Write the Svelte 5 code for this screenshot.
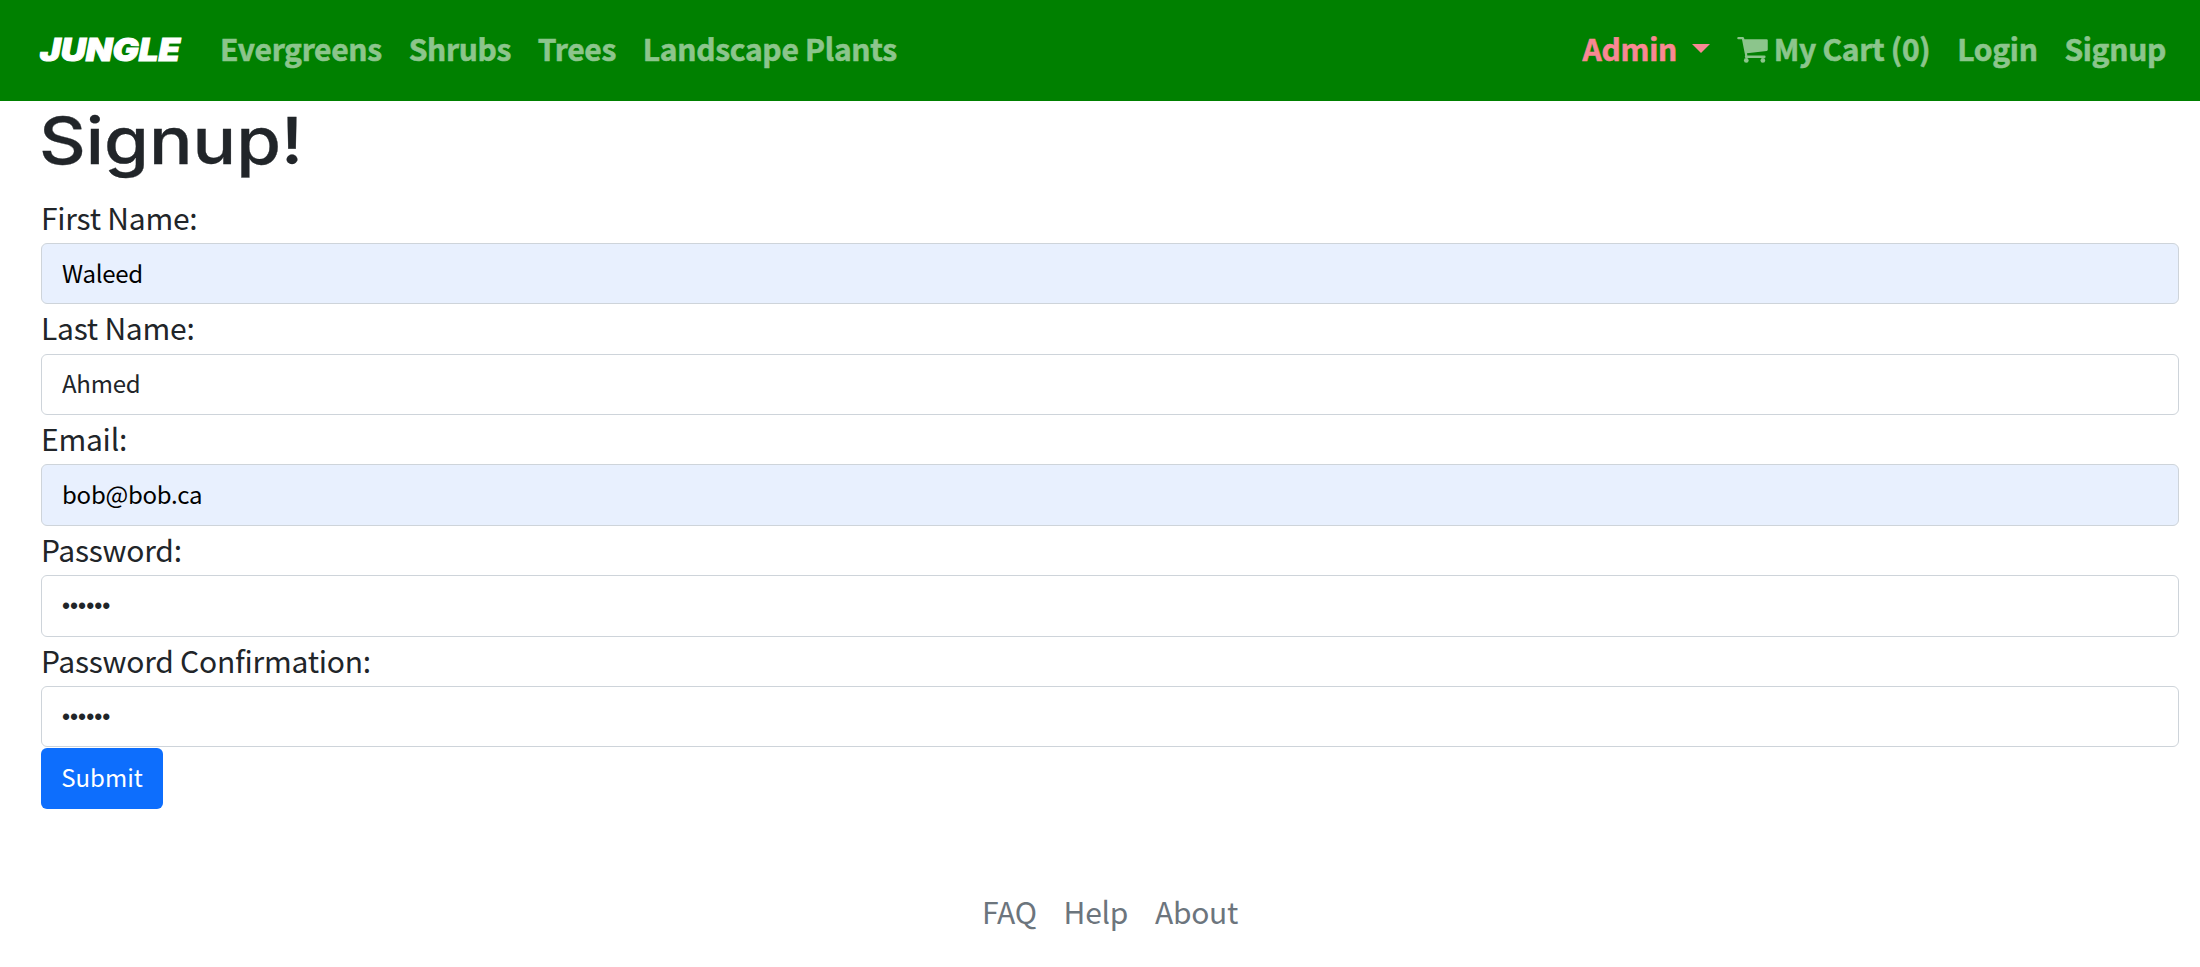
<script>
  const categories = ['Evergreens', 'Shrubs', 'Trees', 'Landscape Plants'];
  const fields = [
    { id: 'first', label: 'First Name:', type: 'text', value: 'Waleed', filled: true },
    { id: 'last', label: 'Last Name:', type: 'text', value: 'Ahmed' },
    { id: 'email', label: 'Email:', type: 'text', value: 'bob@bob.ca', filled: true },
    { id: 'password', label: 'Password:', type: 'password', value: 'secret' },
    { id: 'confirm', label: 'Password Confirmation:', type: 'password', value: 'secret' }
  ];
  const links = ['FAQ', 'Help', 'About'];
</script>

<nav>
  <a class="brand" href="#top">
    <svg width="144" height="50"><text x="1" y="35" textLength="140" lengthAdjust="spacingAndGlyphs">JUNGLE</text></svg>
  </a>
  <div class="group">
    {#each categories as name}<a href="#top">{name}</a>{/each}
  </div>
  <div class="group right">
    <a class="admin" href="#top">Admin<span class="caret"></span></a>
    <a class="cart" href="#top">
      <svg width="31" height="26" viewBox="0 0 31 26.4" fill="currentColor">
        <path d="M1.2 0H5.6Q6.7 0 7 1.2L7.3 2.2H29.8Q31 2.2 31 3.4V13Q31 14.1 29.9 14.3L9.9 16.6L10.3 18.8H27.6Q28.8 18.8 28.8 20T27.6 21.2H8.9Q7.7 21.2 7.7 20L8 18.5L4.8 2.3H1.2Q0 2.3 0 1.15T1.2 0Z" />
        <circle cx="9.2" cy="23.8" r="2.4" /><circle cx="26" cy="23.8" r="2.4" />
      </svg>My Cart (0)</a>
    <a href="#top">Login</a>
    <a href="#top">Signup</a>
  </div>
</nav>

<main>
  <h1><svg width="262" height="80"><text x="-2" y="63" textLength="264" lengthAdjust="spacingAndGlyphs">Signup!</text></svg></h1>
  <form>
    {#each fields as f}
      <label for={f.id}>{f.label}</label>
      <input id={f.id} type={f.type} value={f.value} class:filled={f.filled} />
    {/each}
    <button type="button">Submit</button>
  </form>
</main>

<footer>
  {#each links as l}<a href="#top">{l}</a>{/each}
</footer>

<style>
  :global(body) {
    background: #fff;
    color: #212529;
    font-family: 'Noto Sans CJK SC', 'Noto Sans', sans-serif;
    overflow: hidden;
  }
  a { text-decoration: none; }
  nav {
    display: flex;
    align-items: center;
    height: 101px;
    box-sizing: border-box;
    padding: 0 34px 6px 39px;
    background: #008000;
    font-size: 30px;
    font-weight: 700;
    line-height: 50px;
    letter-spacing: -0.3px;
    white-space: nowrap;
  }
  nav a { color: #8cc58c; -webkit-text-stroke: 0.6px currentColor; }
  .brand { display: flex; margin: 6px 37px 0 0; letter-spacing: 0; }
  .brand text {
    font: italic 900 31px Inter, sans-serif;
    fill: #fff;
    stroke: #fff;
  }
  .group { display: flex; gap: 26.8px; }
  .right { margin-left: auto; }
  nav .admin { color: #f98893; display: flex; align-items: center; }
  .caret {
    margin: 2px 0 0 15px;
    border: 9px solid transparent;
    border-top-color: currentColor;
    border-bottom: 0;
  }
  .cart { display: flex; align-items: center; gap: 6px; }
  .cart svg { margin-top: 5px; }
  h1 { margin: 0; height: 92.8px; }
  h1 svg { display: block; overflow: visible; }
  h1 text { font: 500 65px Inter, sans-serif; fill: #212529; stroke: #212529; stroke-width: 0.3px; }
  main { padding: 0 21px 0 41px; }
  form { display: flex; flex-direction: column; }
  label {
    box-sizing: border-box;
    height: 49.2px;
    font-size: 30px;
    line-height: 46px;
    letter-spacing: -0.24px;
  }
  input {
    box-sizing: border-box;
    width: 100%;
    height: 61.5px;
    padding: 0 20px 3px;
    border: 1px solid #ced4da;
    border-radius: 6px;
    background: #fff;
    color: #212529;
    font: 24px 'Noto Sans CJK SC', sans-serif;
    letter-spacing: -0.25px;
    outline: none;
  }
  input.filled { background: #e8f0fe; color: #000; }
  input[type='password'] {
    padding: 2px 20px 0;
    font: 23px 'Liberation Sans', sans-serif;
    letter-spacing: 0;
  }
  button {
    align-self: flex-start;
    width: 122px;
    height: 61px;
    margin-top: 0.7px;
    padding: 0 0 4px;
    border: 0;
    border-radius: 6px;
    background: #0d6efd;
    color: #fff;
    font: 24px 'Noto Sans CJK SC', sans-serif;
  }
  footer {
    display: flex;
    justify-content: center;
    gap: 27px;
    padding: 77px 0 0 20px;
    font-size: 30px;
    line-height: 50px;
    letter-spacing: -0.3px;
  }
  footer a { color: #6c757d; }
</style>
